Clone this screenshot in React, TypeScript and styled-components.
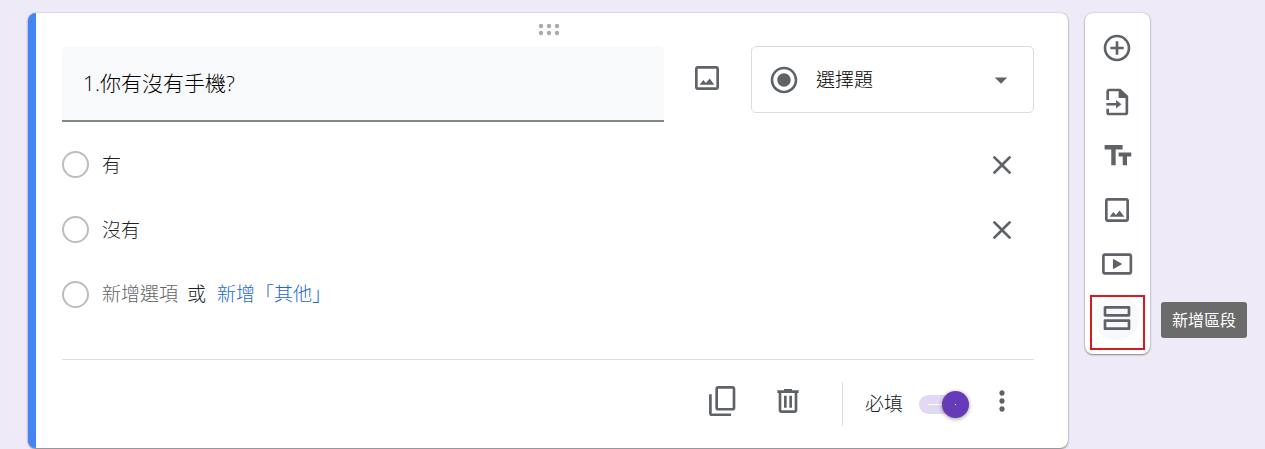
import React, { useState } from "react";
import styled, { createGlobalStyle } from "styled-components";

const GlobalStyle = createGlobalStyle`
  *, *::before, *::after { box-sizing: border-box; }
  body {
    margin: 0;
    background: #eeeaf8;
    color: #202124;
    font-family: "Open Sans", "Noto Sans CJK TC", sans-serif;
    font-size: 19px;
    font-weight: 300;
    line-height: 28px;
  }
  button, input, select {
    margin: 0;
    padding: 0;
    border: 0;
    background: none;
    color: inherit;
    font: inherit;
    outline: none;
  }
  button, select { cursor: pointer; }
`;

const Page = styled.main`
  display: flex;
  align-items: flex-start;
  gap: 17px;
  padding: 13px 115px 1px 28px;
`;

const Card = styled.section`
  flex: 1;
  min-width: 0;
  padding: 0 34px 0 26px;
  background: #fff;
  border-left: 8px solid #4285f4;
  border-radius: 8px;
  box-shadow: 0 1px 2px rgba(0, 0, 0, 0.45), 0 0 2px rgba(0, 0, 0, 0.2);
`;

const DragHandle = styled.div`
  display: flex;
  justify-content: center;
  height: 33px;
  padding-top: 10px;
`;

const QuestionRow = styled.div`
  display: flex;
  align-items: flex-start;
`;

const TitleInput = styled.input`
  flex: 1;
  min-width: 0;
  height: 76px;
  padding: 0 21px 2px;
  background: #f8f9fa;
  border-bottom: 2px solid #80868b;
  border-radius: 5px 5px 0 0;
  color: #000;
  font-size: 21px;
`;

const IconButton = styled.button<{ $width?: number; $height?: number }>`
  display: flex;
  align-items: center;
  justify-content: center;
  flex: none;
  width: ${(p) => p.$width ?? 66}px;
  height: ${(p) => p.$height ?? 64}px;
  color: #5f6368;
`;

const ImageSlot = styled.div`
  display: flex;
  padding: 0 11px 0 10px;
`;

const TypePicker = styled.div`
  display: flex;
  align-items: center;
  width: 283px;
  height: 67px;
  padding: 0 17px 0 16px;
  border: 1px solid #dadce0;
  border-radius: 5px;
  color: #5f6368;
`;

const TypeSelect = styled.select`
  flex: 1;
  min-width: 0;
  height: 100%;
  padding-left: 16px;
  color: #000;
  appearance: none;
`;

const Options = styled.div`
  display: flex;
  flex-direction: column;
  padding: 10px 0 32px;
  border-bottom: 1px solid #dadce0;
`;

const OptionRow = styled.div`
  display: flex;
  align-items: center;
  height: 65px;
`;

const OptionRadio = styled.input`
  flex: none;
  width: 27px;
  height: 27px;
  margin-right: 13px;
  border: 2px solid #bdbdbd;
  border-radius: 50%;
  appearance: none;
`;

const OptionInput = styled.input`
  flex: 1;
  min-width: 0;
  height: 40px;
  padding-bottom: 2px;
`;

const AddLine = styled.div`
  display: flex;
  align-items: center;
  padding-bottom: 2px;
`;

const AddOption = styled.button`
  color: #5f6368;
`;

const OrText = styled.span`
  margin: 0 11px 0 9px;
`;

const AddOther = styled.button`
  color: #1967d2;
`;

const Footer = styled.footer`
  display: flex;
  align-items: flex-start;
  justify-content: flex-end;
  padding: 16px 0 17px;
`;

const Required = styled.label`
  display: flex;
  align-items: center;
  gap: 16px;
  height: 55px;
  cursor: pointer;
`;

const FooterRule = styled.div`
  align-self: center;
  width: 1px;
  height: 44px;
  margin: 0 22px 0 21px;
  background: #dadce0;
`;

const Switch = styled.input`
  && { margin-top: 2px; }
  position: relative;
  width: 50px;
  height: 19px;
  border-radius: 10px;
  background: #e1d8f1;
  appearance: none;
  cursor: pointer;

  &::before {
    content: "";
    position: absolute;
    top: 9px;
    left: 9px;
    width: 14px;
    height: 1px;
    background: #fff;
  }

  &::after {
    content: "";
    position: absolute;
    top: -4px;
    left: 0;
    width: 27px;
    height: 27px;
    border-radius: 50%;
    background: #673ab7 linear-gradient(#fff, #fff) center / 1px 1px no-repeat;
    box-shadow: 0 1px 4px rgba(0, 0, 0, 0.4);
  }

  &:checked::after { left: 23px; }
`;

const Toolbar = styled.nav`
  display: flex;
  flex-direction: column;
  align-items: flex-start;
  flex: none;
  width: 65px;
  padding: 8px 5px 9px;
  background: #fff;
  border-radius: 8px;
  box-shadow: 0 1px 2px rgba(0, 0, 0, 0.4), 0 0 2px rgba(0, 0, 0, 0.2);
`;

const ToolItem = styled.div<{ $hovered?: boolean }>`
  position: relative;
  display: flex;
  background: ${(p) => (p.$hovered ? "radial-gradient(circle, #f8f9fa 0 22px, transparent 23px)" : "none")};
`;

const Marker = styled.span`
  position: absolute;
  top: 4px;
  left: 0;
  width: 55px;
  height: 55px;
  border: 2px solid #d8191f;
  pointer-events: none;
`;

const Tooltip = styled.span`
  position: absolute;
  top: 11px;
  left: 71px;
  padding: 4px 11px;
  border-radius: 3px;
  background: #6b6b6b;
  color: #fff;
  font-size: 16px;
  font-weight: 400;
  white-space: nowrap;
`;

const Svg = styled.svg`
  display: block;
  flex: none;
  fill: currentColor;
`;

const paths = {
  image:
    "M19 5v14H5V5h14m0-2H5c-1.1 0-2 .9-2 2v14c0 1.1.9 2 2 2h14c1.1 0 2-.9 2-2V5c0-1.1-.9-2-2-2zm-5.04 9.29l-2.75 3.54-1.96-2.36L6.5 17h11l-3.54-4.71z",
  radio:
    "M12 7c-2.76 0-5 2.24-5 5s2.24 5 5 5 5-2.24 5-5-2.24-5-5-5zm0-5C6.48 2 2 6.48 2 12s4.48 10 10 10 10-4.48 10-10S17.52 2 12 2zm0 18c-4.42 0-8-3.58-8-8s3.58-8 8-8 8 3.58 8 8-3.58 8-8 8z",
  arrow: "M7 10l5 5 5-5z",
  close:
    "M19 6.41L17.59 5 12 10.59 6.41 5 5 6.41 10.59 12 5 17.59 6.41 19 12 13.41 17.59 19 19 17.59 13.41 12z",
  copy:
    "M20 .8H9C7.9.8 7 1.7 7 2.8v14.4c0 1.1.9 2 2 2h11c1.1 0 2-.9 2-2V2.8c0-1.1-.9-2-2-2zm0 16.4H9V2.8h11v14.4zM4.3 7H2.3v14.3c0 1.1.9 2 2 2h14.5v-2H4.3V7z",
  trash:
    "M15 4V3H9v1H4v2h1v13c0 1.1.9 2 2 2h10c1.1 0 2-.9 2-2V6h1V4h-5zm2 15H7V6h10v13zM9 8h2v9H9zm4 0h2v9h-2z",
  more:
    "M12 8c1.1 0 2-.9 2-2s-.9-2-2-2-2 .9-2 2 .9 2 2 2zm0 2c-1.1 0-2 .9-2 2s.9 2 2 2 2-.9 2-2-.9-2-2-2zm0 6c-1.1 0-2 .9-2 2s.9 2 2 2 2-.9 2-2-.9-2-2-2z",
  add:
    "M13 7h-2v4H7v2h4v4h2v-4h4v-2h-4V7zm-1-5C6.48 2 2 6.48 2 12s4.48 10 10 10 10-4.48 10-10S17.52 2 12 2zm0 18c-4.41 0-8-3.59-8-8s3.59-8 8-8 8 3.59 8 8-3.59 8-8 8z",
  importDoc:
    "M14.5 2H6c-1.1 0-2 .9-2 2v6.5h2V4h7.2v5h5.2v11H6v-3H4v3c0 1.100.9 2 2 2h12.400c1.100 0 2-.9 2-2V7.500L14.500 2zM4 12.700h7.300V10.500l4 3.200-4 3.200v-2.200H4z",
  text: "M2.700 3.800v3.400h5V19h3.300V7.200h5.200V3.800zM13.200 9.300v3h3.100V19h3.200v-6.700h3.200v-3z",
  video:
    "M21.400 4H2.800C1.700 4 .8 4.900.8 6v12c0 1.100.9 2 2 2h18.600c1.100 0 2-.9 2-2V6c0-1.100-.9-2-2-2zm0 14H2.800V6h18.600v12zM9 8v8l7-4z",
  section:
    "M20.500 3h-17C2.700 3 2 3.500 2 4v6c0 .6.500 1 1 1h18c.6 0 1-.4 1-1V4c0-.6-.7-1-1.500-1zM20 9H4V5h16v4zM21 13H3c-.6 0-1 .4-1 1v6c0 .6.400 1 1 1h18c.6 0 1-.4 1-1v-6c0-.6-.4-1-1-1zm-1 6H4v-4h16v4z",
};

function Icon({ name, size = 32 }: { name: keyof typeof paths; size?: number }) {
  return (
    <Svg width={size} height={size} viewBox="0 0 24 24" aria-hidden="true">
      <path fillRule="evenodd" d={paths[name]} />
    </Svg>
  );
}

function DragDots() {
  return (
    <Svg width="24" height="14" viewBox="0 0 24 14" aria-hidden="true" color="#aaa">
      {[5, 13, 21].map((x) =>
        [3, 10].map((y) => <circle key={`${x}-${y}`} cx={x} cy={y} r="2.2" />),
      )}
    </Svg>
  );
}

const tools: { icon: keyof typeof paths; label: string }[] = [
  { icon: "add", label: "新增問題" },
  { icon: "importDoc", label: "匯入問題" },
  { icon: "text", label: "新增標題與說明" },
  { icon: "image", label: "新增圖片" },
  { icon: "video", label: "新增影片" },
  { icon: "section", label: "新增區段" },
];

export default function App() {
  const [title, setTitle] = useState("1.你有沒有手機?");
  const [options, setOptions] = useState(["有", "沒有"]);
  const [required, setRequired] = useState(true);

  return (
    <>
      <GlobalStyle />
      <Page>
        <Card>
          <DragHandle>
            <DragDots />
          </DragHandle>
          <QuestionRow>
            <TitleInput aria-label="問題" value={title} onChange={(e) => setTitle(e.target.value)} />
            <ImageSlot>
              <IconButton type="button" aria-label="新增圖片">
                <Icon name="image" />
              </IconButton>
            </ImageSlot>
            <TypePicker>
              <Icon name="radio" />
              <TypeSelect aria-label="問題類型" defaultValue="選擇題">
                <option>選擇題</option>
              </TypeSelect>
              <Icon name="arrow" size={30} />
            </TypePicker>
          </QuestionRow>
          <Options>
            {options.map((option, i) => (
              <OptionRow key={i}>
                <OptionRadio type="radio" name="answer" aria-label={option} />
                <OptionInput
                  aria-label={`選項 ${i + 1}`}
                  value={option}
                  onChange={(e) => setOptions(options.map((o, j) => (j === i ? e.target.value : o)))}
                />
                <IconButton
                  type="button"
                  aria-label="移除選項"
                  $width={64}
                  onClick={() => setOptions(options.filter((_, j) => j !== i))}
                >
                  <Icon name="close" />
                </IconButton>
              </OptionRow>
            ))}
            <OptionRow>
              <OptionRadio type="radio" name="answer" aria-label="新增選項" />
              <AddLine>
                <AddOption type="button" onClick={() => setOptions([...options, `選項 ${options.length + 1}`])}>
                  新增選項
                </AddOption>
                <OrText>或</OrText>
                <AddOther type="button">新增「其他」</AddOther>
              </AddLine>
            </OptionRow>
          </Options>
          <Footer>
            <IconButton type="button" aria-label="複製" $height={50}>
              <Icon name="copy" />
            </IconButton>
            <IconButton type="button" aria-label="刪除" $height={50}>
              <Icon name="trash" />
            </IconButton>
            <FooterRule />
            <Required>
              必填
              <Switch
                type="checkbox"
                role="switch"
                checked={required}
                onChange={(e) => setRequired(e.target.checked)}
              />
            </Required>
            <IconButton type="button" aria-label="更多選項" $width={65} $height={50}>
              <Icon name="more" />
            </IconButton>
          </Footer>
        </Card>
        <Toolbar aria-label="新增項目">
          {tools.map(({ icon, label }) => (
            <ToolItem key={icon} $hovered={icon === "section"}>
              <IconButton type="button" aria-label={label} $width={54} $height={54}>
                <Icon name={icon} />
              </IconButton>
              {icon === "section" && (
                <>
                  <Marker />
                  <Tooltip role="tooltip">{label}</Tooltip>
                </>
              )}
            </ToolItem>
          ))}
        </Toolbar>
      </Page>
    </>
  );
}
